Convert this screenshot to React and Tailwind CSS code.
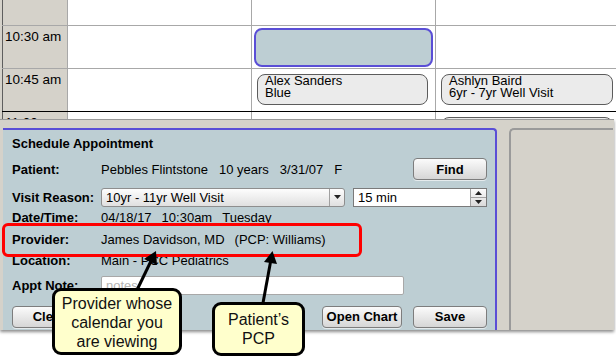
import React from 'react';

const Row = ({ className, time, c2, c3, c4 }) => (
  <div className={`flex ${className}`}>
    <div className="w-[65px] shrink-0 border-l border-[#5e5e5e] bg-[#d5d2ca] pl-[2px] pt-[3px] text-[13.5px] leading-[15px]">
      {time}
    </div>
    <div className="w-[184px] shrink-0 border-l border-[#a8a8a8] bg-white">{c2}</div>
    <div className="w-[184px] shrink-0 border-l border-[#a8a8a8] bg-white">{c3}</div>
    <div className="flex-1 border-l border-[#a8a8a8] bg-white">{c4}</div>
  </div>
);

const Pill = ({ className, title, sub }) => (
  <div className={`mt-[5px] ml-[5px] h-[31px] rounded-[8px] border border-[#5c5c5c] bg-[#ebebeb] pl-[7px] text-[13px] leading-[12px] ${className}`}>
    <div>{title}</div>
    <div>{sub}</div>
  </div>
);

const Label = ({ children }) => <div className="w-[89px] shrink-0 font-bold">{children}</div>;

const Button = ({ className, children }) => (
  <div className={`flex items-center justify-center rounded-[4px] border border-[#7d7d7d] bg-linear-to-b from-[#fbfbfb] to-[#d6d6d6] font-bold shadow-[0_1px_0_rgba(255,255,255,0.6)] ${className}`}>
    {children}
  </div>
);

export default function App() {
  return (
    <div className="relative h-[359px] w-[616px] overflow-hidden bg-white font-['Liberation_Sans',Arial,sans-serif] text-black">
      {/* calendar grid */}
      <div className="h-[119px] overflow-hidden bg-[#d5d2ca] pl-[2px]">
        <Row className="h-[26px] border-b border-[#a8a8a8]" />
        <Row
          className="h-[43px] border-b border-[#a8a8a8]"
          time="10:30 am"
          c3={<div className="mx-[2px] mt-[2px] h-[39px] rounded-[8px] border-2 border-[#5a4ed6] bg-[#bdced3]" />}
        />
        <Row
          className="h-[43px] border-b border-black"
          time="10:45 am"
          c3={<Pill className="mr-[7px]" title="Alex Sanders" sub="Blue" />}
          c4={<Pill className="mr-[3px]" title="Ashlyn Baird" sub="6yr - 7yr Well Visit" />}
        />
        <Row className="h-[20px]" time="11:00 am" c4={<Pill className="mr-[3px]" />} />
      </div>

      {/* lower panels */}
      <div className="flex h-[211px] w-[614px] border-t border-[#9a9a9a] bg-[#d5d2ca] pl-[3px] pt-[8px] shadow-[0_2px_3px_rgba(0,0,0,0.45)]">
        <div className="h-[202px] w-[494px] shrink-0 rounded-tr-[4px] border-t-2 border-r-2 border-[#5a4ed6] bg-[#bdced3] pl-[9px] pr-[8px] text-[13px] leading-[15px]">
          <div className="flex h-[27px] items-center font-bold">Schedule Appointment</div>

          <div className="flex h-[24px] items-center">
            <Label>Patient:</Label>
            <div className="flex gap-[11px]">
              <span>Pebbles Flintstone</span>
              <span>10 years</span>
              <span>3/31/07</span>
              <span>F</span>
            </div>
            <Button className="ml-auto h-[22px] w-[74px]">Find</Button>
          </div>

          <div className="mt-[6px] flex h-[20px] items-center">
            <Label>Visit Reason:</Label>
            <div className="flex h-[19px] w-[244px] items-center rounded-[3px] border border-[#8e8e8e] bg-linear-to-b from-[#fdfdfd] to-[#e0e0e0]">
              <span className="flex-1 pl-[4px]">10yr - 11yr Well Visit</span>
              <span className="flex h-full w-[15px] items-center justify-center border-l border-[#a0a0a0]">
                <svg width="7" height="4" viewBox="0 0 7 4">
                  <path d="M0 0h7L3.5 4z" fill="#222" />
                </svg>
              </span>
            </div>
            <div className="ml-[8px] flex h-[19px] w-[134px] items-center border border-[#7a7a7a] bg-white">
              <span className="flex-1 pl-[4px]">15 min</span>
              <span className="flex h-full w-[16px] flex-col border-l border-[#a0a0a0] bg-linear-to-b from-[#fbfbfb] to-[#dadada]">
                <span className="flex flex-1 items-center justify-center border-b border-[#a0a0a0]">
                  <svg width="7" height="4" viewBox="0 0 7 4">
                    <path d="M0 4h7L3.5 0z" fill="#222" />
                  </svg>
                </span>
                <span className="flex flex-1 items-center justify-center">
                  <svg width="7" height="4" viewBox="0 0 7 4">
                    <path d="M0 0h7L3.5 4z" fill="#222" />
                  </svg>
                </span>
              </span>
            </div>
          </div>

          <div className="flex h-[21px] items-center">
            <Label>Date/Time:</Label>
            <div className="flex gap-[10px]">
              <span>04/18/17</span>
              <span>10:30am</span>
              <span>Tuesday</span>
            </div>
          </div>

          <div className="flex h-[22px] items-center">
            <Label>Provider:</Label>
            <div className="flex gap-[10px]">
              <span>James Davidson, MD</span>
              <span>(PCP: Williams)</span>
            </div>
          </div>

          <div className="flex h-[21px] items-center">
            <Label>Location:</Label>
            <span>Main - PCC Pediatrics</span>
          </div>

          <div className="mt-[5px] flex h-[19px] items-center">
            <Label>Appt Note:</Label>
            <div className="flex h-[19px] w-[303px] items-center rounded-[2px] border border-[#a8a8a8] bg-white pl-[4px] text-[#b4b4b4]">
              notes
            </div>
          </div>

          <div className="mt-[10px] flex h-[23px] items-center">
            <Button className="h-[22px] w-[74px]">Clear</Button>
            <Button className="ml-auto h-[22px] w-[80px]">Open Chart</Button>
            <Button className="ml-[11px] h-[22px] w-[74px]">Save</Button>
          </div>
        </div>

        <div className="ml-[12px] h-[202px] w-[104px] shrink-0 rounded-tl-[5px] border-t-2 border-l-2 border-[#9a9a9a]" />
      </div>

      {/* annotation: highlight */}
      <div className="absolute left-[2px] top-[223px] h-[34px] w-[360px] rounded-[6px] border-[3px] border-[#ff0000]" />

      {/* annotation: arrows */}
      <svg className="pointer-events-none absolute left-0 top-0" width="616" height="359" viewBox="0 0 616 359">
        <line x1="137" y1="290" x2="151" y2="261" stroke="#000" strokeWidth="3" />
        <polygon points="156,251 157,265 144,259" fill="#000" />
        <line x1="263" y1="303" x2="270.5" y2="262" stroke="#000" strokeWidth="3" />
        <polygon points="272.5,251 277,264 264,262" fill="#000" />
      </svg>

      {/* annotation: callouts */}
      <div className="absolute left-[52px] top-[288px] flex h-[67px] w-[130px] flex-col items-center justify-center rounded-[9px] border-[3px] border-black bg-[#ffffcc] pt-[1px] text-center text-[16px] leading-[19px] text-[#111]">
        <div>Provider whose</div>
        <div>calendar you</div>
        <div>are viewing</div>
      </div>
      <div className="absolute left-[212px] top-[302px] flex h-[54px] w-[93px] flex-col items-center justify-center rounded-[9px] border-[3px] border-black bg-[#ffffcc] text-center text-[16px] leading-[19px] text-[#111]">
        <div>Patient’s</div>
        <div>PCP</div>
      </div>
    </div>
  );
}
